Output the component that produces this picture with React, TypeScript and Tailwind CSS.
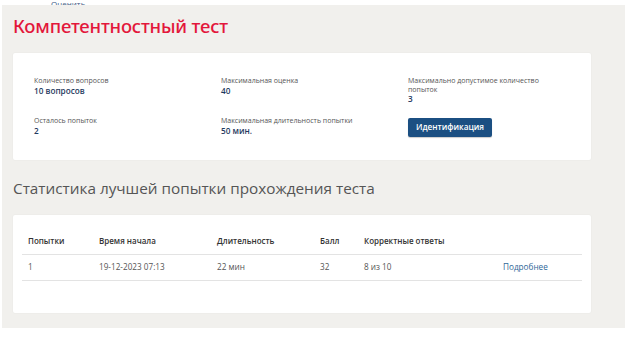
import React from "react";

const font = { fontFamily: '"Open Sans", "Noto Sans", Arial, sans-serif' };

function Field({ label, value, labelClass = "" }: { label: string; value: string; labelClass?: string }) {
  return (
    <div className="flex flex-col">
      <div className={`text-[7px] leading-[8.5px] text-[#555] ${labelClass}`}>{label}</div>
      <div className="text-[8.2px] leading-[10px] font-semibold text-[#1f3a60]">{value}</div>
    </div>
  );
}

export default function App() {
  const cols = ["Попытки", "Время начала", "Длительность", "Балл", "Корректные ответы", ""];
  const widths = ["w-[71px]", "w-[118px]", "w-[103px]", "w-[44px]", "w-[139px]", "w-auto"];
  const row = ["1", "19-12-2023 07:13", "22 мин", "32", "8 из 10", "Подробнее"];
  return (
    <div className="w-[642px] h-[361px] bg-white overflow-hidden" style={font}>
      <div className="h-[5px] overflow-hidden flex items-end pl-[51px]">
        <span className="text-[8px] leading-[12px] text-[#3b5a85] -mb-[5px]">Оценить</span>
      </div>
      <div className="ml-[2px] w-[623px] h-[323px] bg-[#f1f0ed] pl-[11px] pr-[34px] pt-[8px]">
        <h1 className="text-[18.5px] leading-[26px] font-medium text-[#e3173b] tracking-[-0.2px]" style={{ fontFamily: '"Noto Sans", "Open Sans", sans-serif' }}>
          Компетентностный тест
        </h1>
        <div className="mt-[14px] bg-white rounded-[2px] shadow-[0_0_2px_rgba(0,0,0,0.06)] h-[107px] pl-[21px] pt-[24px]">
          <div className="grid grid-cols-[187px_187px_1fr] gap-y-[8px]">
            <Field label="Количество вопросов" value="10 вопросов" />
            <Field label="Максимальная оценка" value="40" />
            <Field label="Максимально допустимое количество попыток" value="3" labelClass="w-[140px]" />
            <div className="pt-[5px]"><Field label="Осталось попыток" value="2" /></div>
            <div className="pt-[5px]"><Field label="Максимальная длительность попытки" value="50 мин." /></div>
            <div>
              <button className="w-[84px] h-[19px] rounded-[2px] bg-[#1b4f82] text-white text-[8.2px] font-semibold shadow-[0_1px_1px_rgba(0,0,0,0.2)]">
                Идентификация
              </button>
            </div>
          </div>
        </div>
        <h2 className="mt-[17px] text-[15.3px] leading-[22px] text-[#555] font-normal">
          Статистика лучшей попытки прохождения теста
        </h2>
        <div className="mt-[16px] bg-white rounded-[2px] shadow-[0_0_2px_rgba(0,0,0,0.06)] h-[98px] px-[9px] pt-[13px]">
          <table className="w-full table-fixed border-collapse text-left">
            <thead>
              <tr className="h-[26px] border-b border-[#e3e3e3]">
                {cols.map((c, i) => (
                  <th key={i} className={`${widths[i]} pl-[6px] text-[8px] font-semibold text-[#333]`}>{c}</th>
                ))}
              </tr>
            </thead>
            <tbody>
              <tr className="h-[26px] border-b border-[#e3e3e3]">
                {row.map((c, i) => (
                  <td key={i} className={`pl-[6px] text-[8.2px] ${i === 5 ? "text-[#2f6698]" : "text-[#555]"}`}>{c}</td>
                ))}
              </tr>
            </tbody>
          </table>
        </div>
      </div>
    </div>
  );
}
